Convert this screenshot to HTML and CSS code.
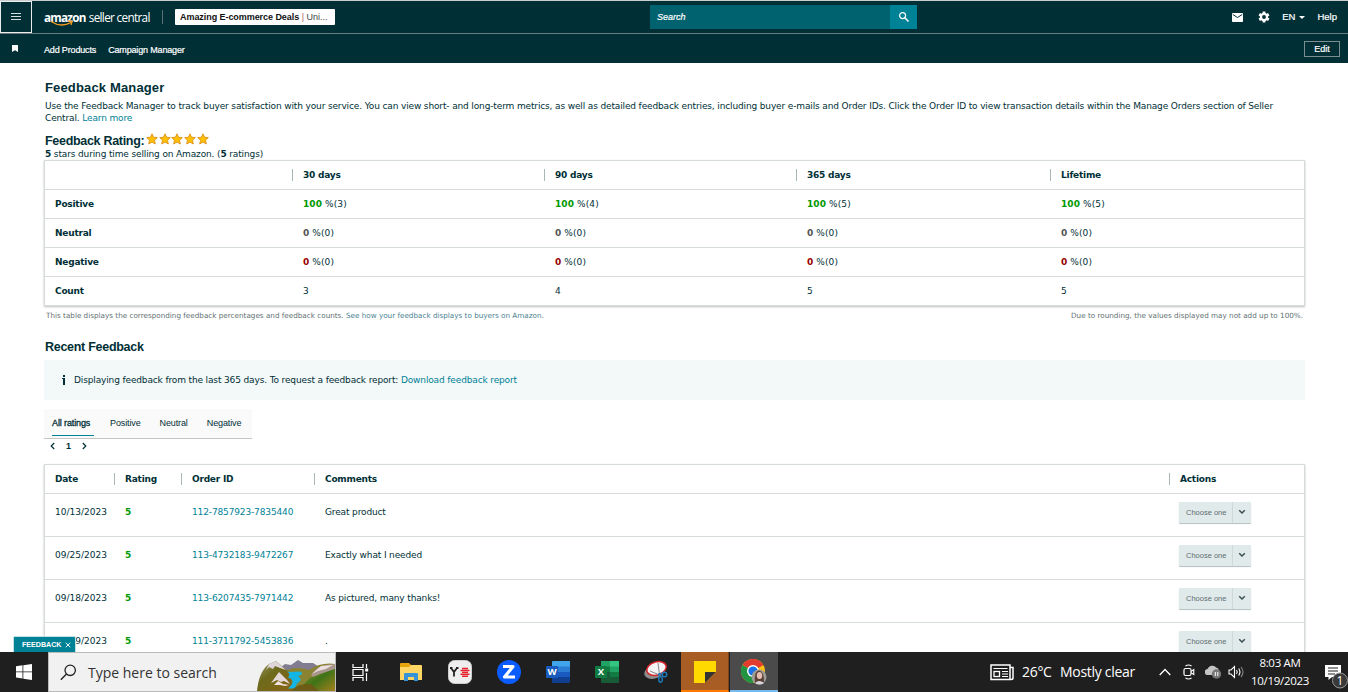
FILE: index.html
```html
<!DOCTYPE html>
<html lang="en">
<head>
    <meta charset="UTF-8">
    <title>Feedback Manager</title>
    <link rel="stylesheet" href="styles.css">
</head>
<body>
<svg class="defs" width="0" height="0">
    <symbol id="star" viewBox="0 0 12 12">
        <path d="M6 .8l1.5 3.4 3.8.4-2.8 2.6.8 3.8L6 9.1 2.7 11l.8-3.8L.7 4.6l3.8-.4z" fill="#ffc107" stroke="#dc9018" stroke-width=".9"/>
    </symbol>
    <symbol id="down" viewBox="0 0 8 6">
        <path d="M1.2 1.2L4 4l2.8-2.8" fill="none" stroke="#3b4f52" stroke-width="1.5"/>
    </symbol>
</svg>
<div class="screen">
    <div class="header">
        <div class="menu"><i></i><i></i><i></i></div>
        <div class="logo">
            <b>amazon</b><span>seller central</span>
            <svg class="smile" width="24" height="7" viewBox="0 0 24 7"><path d="M1 1.5Q11 8 21 2.5M18 1.2l4 .2-1 3.6" fill="none" stroke="#f39a1e" stroke-width="1.3"/></svg>
        </div>
        <div class="store"><b>Amazing E-commerce Deals</b> <em>|</em> <span>Uni...</span></div>
        <div class="search">
            <span>Search</span>
            <div class="search-btn">
                <svg width="12" height="12" viewBox="0 0 12 12"><circle cx="4.6" cy="4.6" r="3" fill="none" stroke="#fff" stroke-width="1.2"/><path d="M6.8 6.8l3.7 3.7" stroke="#fff" stroke-width="1.5"/></svg>
            </div>
        </div>
        <div class="tools">
            <svg class="mail" width="11" height="9" viewBox="0 0 11 9"><rect width="11" height="9" rx=".8" fill="#fff"/><path d="M.8 1.5l4.7 3 4.7-3" fill="none" stroke="#002f36" stroke-width="1"/></svg>
            <svg class="gear" width="12" height="12" viewBox="0 0 12 12"><g fill="#fff"><circle cx="6" cy="6" r="4.2"/><rect x="4.6" y=".5" width="2.8" height="11"/><rect x="4.6" y=".5" width="2.8" height="11" transform="rotate(60 6 6)"/><rect x="4.6" y=".5" width="2.8" height="11" transform="rotate(120 6 6)"/></g><circle cx="6" cy="6" r="1.9" fill="#002f36"/></svg>
            <span class="lang">EN</span>
            <i class="caret"></i>
            <span class="help">Help</span>
        </div>
    </div>
    <div class="subnav">
        <svg width="6" height="7" viewBox="0 0 6 7"><path d="M0 0h6v7L3 5.2 0 7z" fill="#fff"/></svg>
        <a class="nav-add">Add Products</a>
        <a class="nav-camp">Campaign Manager</a>
        <div class="edit">Edit</div>
    </div>

    <div class="main">
        <h1>Feedback Manager</h1>
        <p class="intro"><span class="intro-line">Use the Feedback Manager to track buyer satisfaction with your service. You can view short- and long-term metrics, as well as detailed feedback entries, including buyer e-mails and Order IDs. Click the Order ID to view transaction details within the Manage Orders section of Seller</span><br>Central. <a>Learn more</a></p>
        <div class="rating">
            <h2>Feedback Rating:</h2>
            <svg width="12" height="12"><use href="#star"/></svg>
            <svg width="12" height="12"><use href="#star"/></svg>
            <svg width="12" height="12"><use href="#star"/></svg>
            <svg width="12" height="12"><use href="#star"/></svg>
            <svg width="12" height="12"><use href="#star"/></svg>
        </div>
        <p class="stars"><b>5</b> stars during time selling on Amazon. (<b>5</b> ratings)</p>

        <div class="table summary">
            <div class="row head"><b></b><b>30 days</b><b>90 days</b><b>365 days</b><b>Lifetime</b></div>
            <div class="row"><b>Positive</b><span><b class="pos">100</b> %(3)</span><span><b class="pos">100</b> %(4)</span><span><b class="pos">100</b> %(5)</span><span><b class="pos">100</b> %(5)</span></div>
            <div class="row"><b>Neutral</b><span><b class="neu">0</b> %(0)</span><span><b class="neu">0</b> %(0)</span><span><b class="neu">0</b> %(0)</span><span><b class="neu">0</b> %(0)</span></div>
            <div class="row"><b>Negative</b><span><b class="neg">0</b> %(0)</span><span><b class="neg">0</b> %(0)</span><span><b class="neg">0</b> %(0)</span><span><b class="neg">0</b> %(0)</span></div>
            <div class="row"><b>Count</b><span>3</span><span>4</span><span>5</span><span>5</span></div>
        </div>
        <div class="notes">
            <span>This table displays the corresponding feedback percentages and feedback counts. <a>See how your feedback displays to buyers on Amazon.</a></span>
            <span class="note-right">Due to rounding, the values displayed may not add up to 100%.</span>
        </div>

        <h2 class="recent">Recent Feedback</h2>
        <div class="info"><svg width="4" height="10" viewBox="0 0 4 10"><path d="M1 0h2v2H1zM0 3h3v7H1V4H0z" fill="#002f36"/></svg><span>Displaying feedback from the last 365 days. To request a feedback report: <a>Download feedback report</a></span></div>

        <div class="tabs">
            <span class="active">All ratings</span><span>Positive</span><span>Neutral</span><span>Negative</span>
        </div>
        <div class="pager">
            <svg width="5" height="8" viewBox="0 0 5 8"><path d="M4.2 1L1.2 4l3 3" fill="none" stroke="#002f36" stroke-width="1.2"/></svg>
            <b>1</b>
            <svg width="5" height="8" viewBox="0 0 5 8"><path d="M.8 1l3 3-3 3" fill="none" stroke="#002f36" stroke-width="1.2"/></svg>
        </div>

        <div class="table orders">
            <div class="row head"><b>Date</b><b>Rating</b><b>Order ID</b><b>Comments</b><b>Actions</b></div>
            <div class="row"><span class="date">10/13/2023</span><b class="pos">5</b><a>112-7857923-7835440</a><span>Great product</span><div class="choose"><span>Choose one</span><i><svg width="8" height="6"><use href="#down"/></svg></i></div></div>
            <div class="row"><span class="date">09/25/2023</span><b class="pos">5</b><a>113-4732183-9472267</a><span>Exactly what I needed</span><div class="choose"><span>Choose one</span><i><svg width="8" height="6"><use href="#down"/></svg></i></div></div>
            <div class="row"><span class="date">09/18/2023</span><b class="pos">5</b><a>113-6207435-7971442</a><span>As pictured, many thanks!</span><div class="choose"><span>Choose one</span><i><svg width="8" height="6"><use href="#down"/></svg></i></div></div>
            <div class="row"><span class="date">09/09/2023</span><b class="pos">5</b><a>111-3711792-5453836</a><span>.</span><div class="choose"><span>Choose one</span><i><svg width="8" height="6"><use href="#down"/></svg></i></div></div>
        </div>
        <div class="feedback">FEEDBACK <svg width="6" height="6" viewBox="0 0 6 6"><path d="M.7.7l4.6 4.6M5.3.7L.7 5.3" stroke="#fff" stroke-width=".9"/></svg></div>
    </div>

    <div class="taskbar">
        <div class="start">
            <svg width="16" height="16" viewBox="0 0 16 16"><path d="M0 2.2l6.5-.9v6.2H0zM7.3 1.2L16 0v7.500H7.3zM0 8.3h6.5v6.2L0 13.6zM7.3 8.3H16V16l-8.7-1.2z" fill="#fff"/></svg>
        </div>
        <div class="find">
            <svg width="17" height="17" viewBox="0 0 17 17"><circle cx="10.2" cy="6.3" r="5.2" fill="none" stroke="#222" stroke-width="1.3"/><path d="M6.5 10L.8 15.8" stroke="#222" stroke-width="1.4"/></svg>
            <span>Type here to search</span>
            <svg class="scene" width="78" height="32" viewBox="0 0 78 32">
                <defs>
                    <linearGradient id="hill" x1="0" y1="0" x2="1" y2="1"><stop offset="0" stop-color="#a09a70"/><stop offset=".4" stop-color="#6d6a1c"/><stop offset="1" stop-color="#8a6412"/></linearGradient>
                    <linearGradient id="grass" x1="0" y1="0" x2="1" y2="1"><stop offset="0" stop-color="#8d9a2c"/><stop offset=".5" stop-color="#3f7318"/><stop offset="1" stop-color="#a5801c"/></linearGradient>
                </defs>
                <path d="M20 11L28 5l6 1 7-5 5 3 10 0 8 5-2 5H20z" fill="#827c91"/>
                <path d="M24 14Q38 6 52 11Q64 3 78 5v27H20z" fill="#8a8432"/>
                <path d="M78 8Q58 12 46 26v6h32z" fill="url(#grass)"/>
                <path d="M54 16Q60 7 68 6l10-1v5l-12 4-10 4z" fill="#a8958c"/>
                <path d="M55 15l9-8 12-1-7 4-8 2z" fill="#eadfdd"/>
                <path d="M0 32Q2 12 12 5L19 2l14 12 4 18z" fill="url(#hill)"/>
                <path d="M9 11L12 5l7-3 10 9-6-2-5-2-2 3-4-2z" fill="#ddd5da"/>
                <path d="M14 24l8-11 8 8 3 4-6-3-3 1-4-2z" fill="#e4d8d8"/>
                <path d="M17 26l4-4 5 3 6 1-4 1-5-1z" fill="#f0e2de"/>
                <path d="M33 13l10-.5q5 2-2 5 6 3-1 7l-2 5H31q9-8 0-11 3-4-1-6z" fill="#12b5e4"/>
                <path d="M34 32q6-8 20-7l8 7z" fill="#6d5c16"/>
            </svg>
        </div>
        <div class="apps">
            <div class="app view"><svg width="17" height="17" viewBox="0 0 17 17"><path d="M1 0v3.5h10V0M1 17v-3.5h10V17M1 5.5h10v6H1zM14.5 0v4M14.5 9v8" fill="none" stroke="#fff" stroke-width="1.2"/><rect x="13.2" y="4.5" width="3" height="3" fill="#fff"/></svg></div>
            <div class="app"><svg width="22" height="20" viewBox="0 0 22 20"><path d="M0 2q0-1 1-1h8l2 2v4H0z" fill="#e5a50f"/><path d="M0 5h9l2-2h10q1 0 1 1v14H0z" fill="#ffd664"/><path d="M4 19v-7q0-1 1-1h12q1 0 1 1v7h-4v-4H8v4z" fill="#3793d6"/></svg></div>
            <div class="app"><svg width="24" height="24" viewBox="0 0 24 24"><rect x=".5" y=".5" width="23" height="23" rx="6" fill="#eee" stroke="#ccc"/><path d="M3 8l3 4 3-4M6 12v4.5M2 8h2.5M8 8h2.5" fill="none" stroke="#222" stroke-width="1.8"/><path d="M14 8.5h6M12.5 10.5h9M14 12.4h6M12.5 14.3h9M14 16.3h6" stroke="#e8202b" stroke-width="1.4"/></svg></div>
            <div class="app"><svg width="24" height="24" viewBox="0 0 24 24"><circle cx="12" cy="12" r="12" fill="#0b5cff"/><path d="M6 6.5h10L7.5 17H18" fill="none" stroke="#fff" stroke-width="3.2" stroke-linejoin="round"/></svg></div>
            <div class="app"><svg width="24" height="22" viewBox="0 0 24 22"><path d="M6 1q0-1 1-1h17v6H6z" fill="#41a5ee"/><path d="M6 5.5h18v5.5H6z" fill="#2b7cd3"/><path d="M6 11h18v5H6z" fill="#185abd"/><path d="M6 16h18v5q0 1-1 1H7q-1 0-1-1z" fill="#103f91"/><rect y="5" width="12" height="12" rx="1" fill="#185abd"/><text x="6" y="14.3" text-anchor="middle" class="mark">W</text></svg></div>
            <div class="app"><svg width="24" height="22" viewBox="0 0 24 22"><path d="M6 0h9v6H6z" fill="#21a366"/><path d="M15 0h9v6h-9z" fill="#33c481"/><path d="M6 5.5h9V11H6zM15 11h9v5.5h-9z" fill="#107c41"/><path d="M15 5.5h9V11h-9z" fill="#21a366"/><path d="M6 11h9v11H7q-1 0-1-1zM15 16h9v6h-9z" fill="#185c37"/><rect y="5" width="12" height="12" rx="1" fill="#107c41"/><text x="6" y="14.3" text-anchor="middle" class="mark">X</text></svg></div>
            <div class="app"><svg width="24" height="24" viewBox="0 0 24 24"><ellipse cx="10" cy="12" rx="10" ry="6.5" fill="#8c8c8c" transform="rotate(-18 10 12)"/><ellipse cx="12.5" cy="8.5" rx="10" ry="6.5" fill="#f5f5f5" stroke="#d7262b" stroke-width="1.5" transform="rotate(-18 12.5 8.5)"/><path d="M14 3l1.5 12M6 11l9.5 4" stroke="#888" stroke-width="1"/><path d="M14 15l3-1.5" stroke="#1d78b5" stroke-width="2"/><circle cx="20.5" cy="14.5" r="2.3" fill="none" stroke="#1d78b5" stroke-width="1.5"/><ellipse cx="16.5" cy="19.5" rx="1.8" ry="2.7" fill="none" stroke="#1d78b5" stroke-width="1.5"/></svg></div>
            <div class="app notes-app"><svg width="22" height="22" viewBox="0 0 22 22"><path d="M0 0h22v11L11 22H0z" fill="#ffd900"/><path d="M11 11h11L11 22z" fill="#333"/><path d="M22 11v11H11z" fill="#a85d25"/></svg></div>
            <div class="app chrome"><svg width="26" height="26" viewBox="0 0 26 26"><circle cx="12" cy="12" r="12" fill="#fbc116"/><path d="M12 12L1.6 6A12 12 0 0 1 22.4 6z" fill="#e33b2e"/><path d="M12 12L1.6 6A12 12 0 0 0 12 24l5-9z" fill="#229342"/><circle cx="12" cy="12" r="6" fill="#fff"/><circle cx="12" cy="12" r="4.6" fill="#1a73e8"/><circle cx="18" cy="18" r="7.5" fill="#9d9b94"/><path d="M14 24q-1-12 4-12.500 5 .5 5 12z" fill="#5b4038"/><ellipse cx="18.5" cy="16.5" rx="2.7" ry="3.5" fill="#e7bfb1"/><path d="M14 24q4-4 9 0-4 3-9 0z" fill="#d9d5dc"/></svg></div>
        </div>
        <div class="weather">
            <svg width="24" height="17" viewBox="0 0 24 17"><path d="M1 1h19v14.5H1zM20 3.5h3V14q0 1.5-2 1.5h-2" fill="none" stroke="#fff" stroke-width="1.5"/><path d="M3.5 4.5h14M12 7.5h6M12 10h6M12 12.5h6" stroke="#fff" stroke-width="1.2"/><rect x="4" y="7.5" width="5.5" height="5" fill="none" stroke="#fff" stroke-width="1.3"/></svg>
            <span class="deg">26°C</span><span class="sky">Mostly clear</span>
        </div>
        <div class="tray">
            <svg width="12" height="8" viewBox="0 0 12 8"><path d="M.7 7L6 1.5 11.3 7" fill="none" stroke="#fff" stroke-width="1.3"/></svg>
            <svg class="meet" width="12" height="16" viewBox="0 0 12 16"><rect x="1" y="4.5" width="7" height="7" rx="1.5" fill="none" stroke="#fff" stroke-width="1.2"/><path d="M8 7.5l2.8-2v5L8 8.7M2.5 2Q5.500 0 8.5 2M2.5 14q3 2 6 0" fill="none" stroke="#fff" stroke-width="1.1"/></svg>
            <svg class="cloud" width="17" height="14" viewBox="0 0 17 14"><path d="M3 10a3 3 0 0 1-.5-6A5 5 0 0 1 11 2.500a4 4 0 0 1 3 4V10z" fill="#c4c4c4"/><circle cx="11.5" cy="9" r="4.7" fill="#777"/><path d="M10.3 7v4M12.8 7v4" stroke="#fff" stroke-width="1"/></svg>
            <svg class="sound" width="17" height="14" viewBox="0 0 17 14"><path d="M1 5h2l3.5-3.5v11L3 9H1z" fill="none" stroke="#fff" stroke-width="1.1"/><path d="M8.5 5q1.5 2 0 4M10.7 3.5q2.5 3.5 0 7" fill="none" stroke="#fff" stroke-width="1.1"/><path d="M13 2q4 5 0 10" fill="none" stroke="#888" stroke-width="1.1"/></svg>
            <div class="clock">8:03 AM<br>10/19/2023</div>
            <svg class="bell" width="23" height="26" viewBox="0 0 23 26"><path d="M0 2h16v12H7l-3.5 3v-3H0z" fill="#fff"/><path d="M3 5h10M3 8h10M3 11h7" stroke="#1f1f1f" stroke-width="1.2"/><circle cx="15" cy="17.5" r="7.5" fill="#3a3a3a" stroke="#999" stroke-width="1"/><text x="15" y="22" text-anchor="middle" class="count">1</text></svg>
        </div>
    </div>
</div>
</body>
</html>
```
FILE: styles.css
```css
* {
    margin: 0;
    padding: 0;
    box-sizing: border-box;
}

body {
    background: #fff;
    color: #002f36;
    font: 9px/12px "DejaVu Sans", Verdana, sans-serif;
}

svg {
    display: block;
    flex: none;
}

.defs {
    position: absolute;
}

a {
    color: #008296;
}

.screen {
    width: 1348px;
    height: 692px;
    display: flex;
    flex-direction: column;
    overflow: hidden;
}

/* header */
.header {
    height: 34px;
    flex: none;
    display: flex;
    align-items: center;
    background: #002f36;
    border-top: 1px solid #c9cfcf;
    border-bottom: 1px solid #687b7d;
    color: #fff;
    font-family: "Liberation Sans", Arial, sans-serif;
    white-space: nowrap;
}

.menu {
    width: 32px;
    height: 32px;
    border: 1px solid #e8eeee;
    padding: 11px 10px 0;
}

.menu i {
    display: block;
    height: 1px;
    margin-bottom: 2px;
    background: #d6dddd;
}

.logo {
    width: 119px;
    height: 14px;
    margin-left: 12px;
    border-right: 1px solid #5c7073;
    position: relative;
    font: 11.7px/14px "Open Sans", sans-serif;
}

.logo b {
    letter-spacing: -0.75px;
    margin-right: 3px;
}

.logo span {
    letter-spacing: -0.65px;
}

.smile {
    position: absolute;
    left: 6px;
    top: 10px;
}

.store {
    width: 160px;
    height: 16px;
    margin-left: 12px;
    padding-left: 5px;
    background: #fff;
    border-radius: 1px;
    color: #111;
    font-size: 9px;
    line-height: 16px;
}

.store b {
    letter-spacing: -0.06px;
}

.store em {
    color: #b06060;
    font-style: normal;
}

.store span {
    color: #444;
}

.search {
    width: 267px;
    height: 24px;
    margin-left: 315px;
    padding-left: 7px;
    display: flex;
    align-items: center;
    justify-content: space-between;
    background: #00616f;
    font-size: 9px;
    font-style: italic;
    -webkit-text-stroke: 0.2px #fff;
}

.search-btn {
    width: 27px;
    height: 24px;
    padding: 6px 8px;
    background: #008296;
}

.tools {
    margin-left: auto;
    padding-right: 11px;
    display: flex;
    align-items: center;
    font-size: 9.5px;
    -webkit-text-stroke: 0.2px #fff;
}

.gear {
    margin: 0 12px 0 15px;
}

.caret {
    margin: 1px 12px 0 4px;
    border: 3px solid transparent;
    border-top-color: #fff;
    border-bottom: 0;
}

.subnav {
    height: 29px;
    flex: none;
    display: flex;
    align-items: center;
    padding: 0 8px 0 12px;
    background: #002f36;
    color: #fff;
    font-family: "Liberation Sans", Arial, sans-serif;
    font-size: 9px;
    -webkit-text-stroke: 0.2px #fff;
}

.subnav a {
    color: #fff;
    padding-top: 2px;
    letter-spacing: -0.16px;
}

.nav-add {
    margin: 0 12px 0 26px;
}

.edit {
    width: 36px;
    height: 16px;
    margin-left: auto;
    border: 1px solid #7b8d8f;
    line-height: 14px;
    text-align: center;
}

/* content */
.main {
    height: 589px;
    padding: 17px 43px 0 44px;
    position: relative;
    overflow: hidden;
    letter-spacing: -0.137px;
}

h1, h2 {
    font: bold 13px/16px "Liberation Sans", Arial, sans-serif;
    letter-spacing: 0.15px;
}

h1 {
    padding-left: 1px;
}

.intro {
    margin-top: 4px;
    padding-left: 1px;
    white-space: nowrap;
}

.rating {
    height: 12px;
    margin-top: 10px;
    padding-left: 1px;
    display: flex;
    align-items: center;
}

.rating h2 {
    width: 101px;
    font-size: 12.5px;
    letter-spacing: -0.3px;
    padding-top: 2px;
}

.rating svg {
    margin: -2px 0.7px 0 0;
}

.stars {
    margin-top: 2px;
    padding-left: 1px;
}

.table {
    width: 1261px;
    border: 1px solid #d5dbdb;
    box-shadow: 0 1px 2px rgba(0, 0, 0, .25);
}

.row {
    display: grid;
    align-items: center;
    border-bottom: 1px solid #d5dbdb;
}

.row > * {
    padding-left: 10px;
}

.row > b {
    letter-spacing: -0.22px;
}

.head b + b {
    margin-left: -1px;
    border-left: 1px solid #aab7b8;
}

.pos {
    color: #090;
}

.neu {
    color: #555;
}

.neg {
    color: #900;
}

.summary .row {
    height: 29px;
    grid-template-columns: 248px 252px 252px 254px 1fr;
}

.summary .row:last-child {
    height: 28px;
    border-bottom: 0;
}

.summary span {
    letter-spacing: 0.1px;
}

.notes {
    display: flex;
    justify-content: space-between;
    margin-top: 4px;
    padding: 0 2px 0 2px;
    font-size: 7.22px;
    letter-spacing: 0;
    color: #5f7073;
}

.notes a {
    color: #4a7f91;
}

.recent {
    margin-top: 17px;
    padding-left: 1px;
    font-size: 12.5px;
    letter-spacing: -0.28px;
}

.info {
    width: 1261px;
    height: 40px;
    margin-top: 5px;
    padding-left: 18px;
    display: flex;
    align-items: center;
    background: #f3f8f9;
}

.info span {
    margin-left: 8px;
}

.tabs {
    width: 208px;
    height: 30px;
    margin-top: 9px;
    padding-left: 8px;
    display: flex;
    background: #fafafa;
    border-bottom: 1px solid #c6c6c6;
    font: 9px/28px "Liberation Sans", Arial, sans-serif;
    letter-spacing: -0.12px;
    white-space: nowrap;
}

.tabs span {
    height: 27px;
    margin-right: 19px;
}

.tabs .active {
    width: 42px;
    margin-right: 16px;
    flex: none;
    border-bottom: 1px solid #008296;
    -webkit-text-stroke: 0.3px #002f36;
}

.pager {
    height: 14px;
    padding-left: 6px;
    display: flex;
    align-items: center;
    gap: 11px;
    font-family: "Liberation Sans", Arial, sans-serif;
    font-size: 9px;
}

.orders {
    margin-top: 11px;
}

.orders .row {
    height: 43px;
    grid-template-columns: 70px 67px 133px 855px 1fr;
    align-items: start;
    padding-top: 12px;
}

.orders .head {
    height: 29px;
    align-items: center;
    padding-top: 0;
}

.orders .date {
    letter-spacing: 0;
}

.orders .choose {
    width: 72px;
    height: 21px;
    margin: -4px 0 0 9px;
    padding: 0 0 0 7px;
    display: flex;
    align-items: center;
    justify-content: space-between;
    background: #e1eaeb;
    border-radius: 1px;
    box-shadow: 0 1px 1px #b4bfc0;
    font: 7.5px/21px "Liberation Sans", Arial, sans-serif;
    letter-spacing: 0;
    color: #5e6d70;
}

.choose i {
    width: 19px;
    height: 21px;
    padding: 7px 5px;
    border-left: 1px solid #cfd9da;
}

.feedback {
    position: absolute;
    left: 13px;
    bottom: 0;
    width: 63px;
    height: 16px;
    padding-left: 8px;
    display: flex;
    align-items: center;
    gap: 4px;
    background: #008296;
    border: 1px solid #bfe0e4;
    border-bottom: 0;
    border-radius: 2px 2px 0 0;
    color: #fff;
    font: bold 7.1px/14px "Liberation Sans", Arial, sans-serif;
    letter-spacing: 0;
}

/* taskbar */
.taskbar {
    height: 40px;
    flex: none;
    display: flex;
    background: #1f1f1f;
    color: #fff;
    font-family: "Open Sans", sans-serif;
    white-space: nowrap;
}

.start {
    width: 48px;
    padding: 12px 16px;
}

.find {
    width: 288px;
    height: 40px;
    padding-left: 11px;
    display: flex;
    align-items: center;
    background: #f1f1f1;
    border: 1px solid #bbb;
    color: #333;
    font-size: 14px;
}

.find span {
    margin-left: 11px;
    padding-top: 2px;
}

.scene {
    margin-left: auto;
    align-self: flex-end;
}

.apps {
    display: flex;
    gap: 1px;
    margin-left: 2px;
}

.app {
    width: 48px;
    height: 40px;
    display: flex;
    align-items: center;
    justify-content: center;
}

.view {
    padding-right: 3px;
}

.notes-app {
    background: #a85d25;
    border-right: 1px solid #7d431b;
    border-bottom: 2px solid #ff7a00;
}

.chrome {
    background: #4b4b4b;
    border-bottom: 2px solid #76b9ed;
}

.notes-app svg, .chrome svg {
    margin-top: 2px;
}

.mark {
    fill: #fff;
    font: bold 9.5px "Open Sans", sans-serif;
}

.weather {
    display: flex;
    align-items: center;
    margin-left: 212px;
    font-size: 14px;
    letter-spacing: -0.3px;
}

.deg {
    width: 38px;
    margin-left: 8px;
}

.sky {
    width: 76px;
}

.tray {
    display: flex;
    align-items: center;
    margin-left: 23px;
}

.meet {
    margin-left: 12px;
}

.cloud {
    margin-left: 10px;
}

.sound {
    margin-left: 6px;
}

.clock {
    width: 70px;
    text-align: center;
    font-size: 11.5px;
    line-height: 18px;
    letter-spacing: -0.3px;
}

.bell {
    margin: 8px 0 0 10px;
}

.count {
    fill: #fff;
    font: 12px "Open Sans", sans-serif;
}
```
